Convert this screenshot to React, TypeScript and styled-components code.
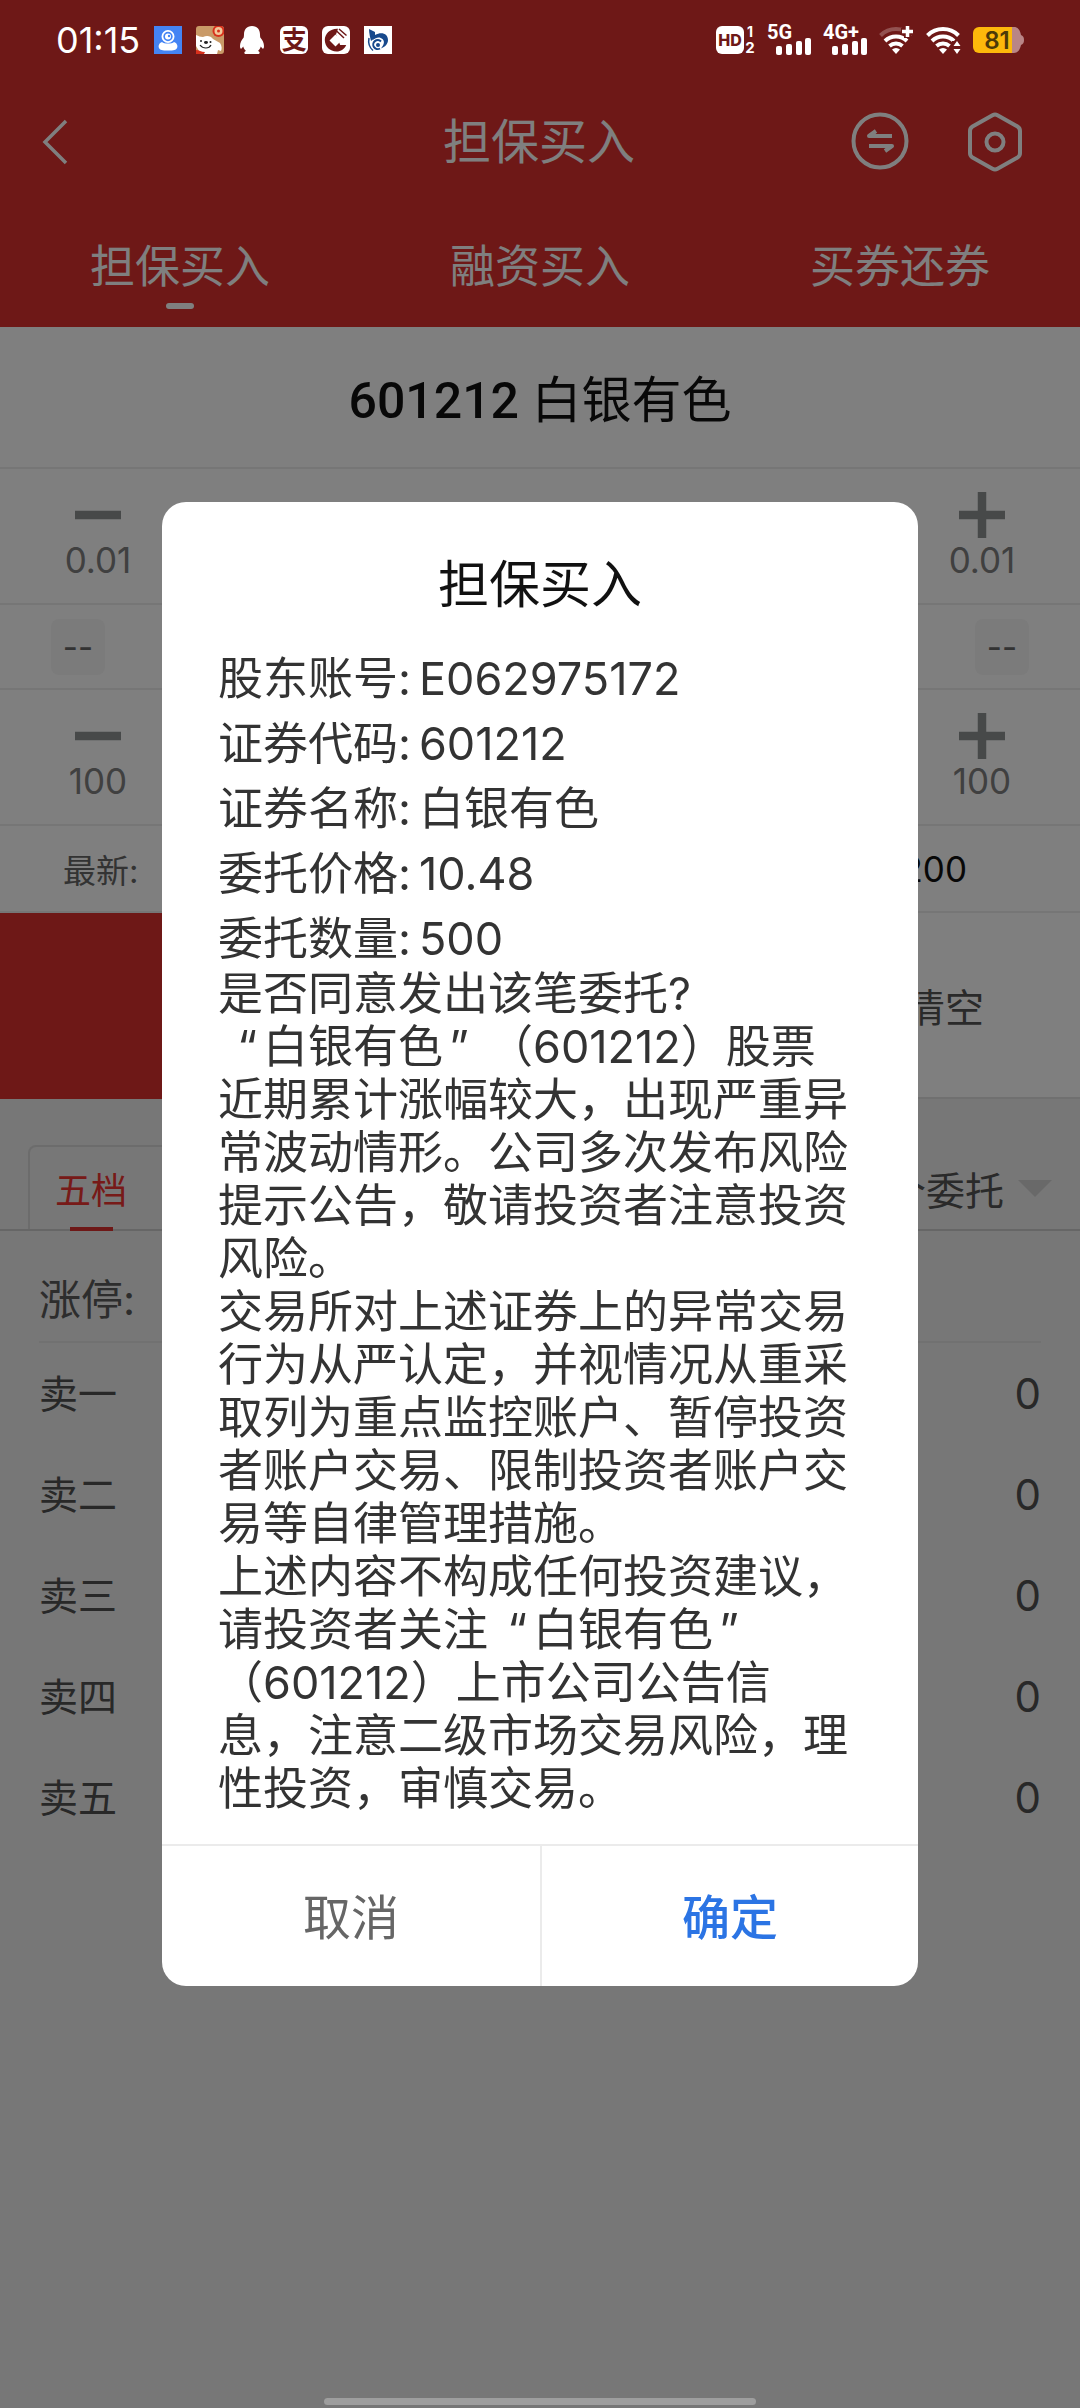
import React from 'react';
import styled, { createGlobalStyle } from 'styled-components';

const GlobalStyle = createGlobalStyle`
  * { box-sizing: border-box; }
  body {
    margin: 0;
    background: #eeeeee;
    font-family: Inter, 'Noto Sans CJK SC', sans-serif;
    color: #333333;
  }
  button {
    margin: 0;
    padding: 0;
    border: 0;
    background: none;
    font: inherit;
    color: inherit;
    cursor: pointer;
  }
  h1, h2, p, dl, dt, dd, ul { margin: 0; padding: 0; font-weight: 400; }
`;

const Screen = styled.div`
  display: flex;
  flex-direction: column;
  min-height: 100vh;
`;

/* ---------- status bar ---------- */

const StatusBar = styled.header`
  position: relative;
  z-index: 3;
  display: flex;
  align-items: center;
  justify-content: space-between;
  height: 80px;
  padding: 0 56px;
  background: #6e1817;
  color: #ffffff;
`;

const StatusGroup = styled.div<{ $gap: number }>`
  display: flex;
  align-items: center;
  gap: ${(p) => p.$gap}px;
`;

const Clock = styled.time`
  font-size: 36px;
  line-height: 40px;
`;

const AppBadge = styled.span`
  display: grid;
  place-items: center;
  width: 28px;
  height: 28px;
  border-radius: 6px;
  background: #ffffff;
  color: #6e1817;
  font-size: 25px;
  font-weight: 700;
  line-height: 28px;
`;

/* ---------- navigation ---------- */

const NavBar = styled.nav`
  display: grid;
  grid-template-columns: 1fr auto 1fr;
  align-items: center;
  height: 123px;
  padding: 0 56px 0 40px;
  background: #dc302e;
  color: #ffffff;
`;

const NavTitle = styled.h1`
  grid-column: 2;
  margin-left: 14px;
  font-size: 48px;
  line-height: 64px;
`;

const NavActions = styled.div`
  display: flex;
  justify-content: flex-end;
  gap: 57px;
`;

const IconButton = styled.button`
  display: flex;
  justify-self: start;
`;

const TopTabs = styled.div`
  display: grid;
  grid-template-columns: repeat(3, 1fr);
  height: 124px;
  background: #dc302e;
  color: #ffffff;
`;

const TopTab = styled.button<{ $active?: boolean }>`
  display: flex;
  flex-direction: column;
  align-items: center;
  padding-top: 34px;
  font-size: 45px;
  line-height: 60px;

  &::after {
    content: '';
    width: 28px;
    height: 6px;
    margin-top: 6px;
    border-radius: 3px;
    background: ${(p) => (p.$active ? '#ffffff' : 'transparent')};
  }
`;

/* ---------- order form ---------- */

const Form = styled.section`
  background: #ffffff;
`;

const Stock = styled.h2`
  height: 142px;
  border-bottom: 2px solid #ededed;
  font-family: Roboto, 'Noto Sans CJK SC', sans-serif;
  font-size: 50px;
  line-height: 148px;
  text-align: center;
  color: #111111;
`;

const StockCode = styled.span`
  font-weight: 500;
`;

const FormRow = styled.div<{ $height: number; $pad?: number }>`
  display: flex;
  align-items: center;
  justify-content: space-between;
  height: ${(p) => p.$height}px;
  padding: 0 ${(p) => p.$pad ?? 0}px;
  border-bottom: 2px solid #ededed;
`;

const StepButton = styled.button`
  display: flex;
  flex-direction: column;
  align-items: center;
  align-self: stretch;
  width: 196px;
  padding-top: 23px;
  font-size: 35px;
  line-height: 44px;
  color: #808080;
`;

const LimitButton = styled.button`
  width: 54px;
  height: 56px;
  border-radius: 8px;
  background: #f6f6f6;
  font-size: 33px;
  line-height: 56px;
  color: #666666;
`;

const Caption = styled.span`
  font-size: 33px;
  color: #666666;
`;

const Amount = styled.span`
  padding-right: 50px;
  font-size: 35px;
  color: #111111;
`;

const Actions = styled.div`
  display: grid;
  grid-template-columns: 3fr 1fr;
  height: 186px;
`;

const BuyButton = styled.button`
  background: #dc302e;
`;

const ClearButton = styled.button`
  border-bottom: 2px solid #e0e0e0;
  font-size: 39px;
  color: #555555;
`;

/* ---------- quotes ---------- */

const QuoteTabs = styled.div`
  display: flex;
  align-items: flex-end;
  justify-content: space-between;
  height: 132px;
  padding: 0 28px;
  border-bottom: 2px solid #cccccc;
`;

const TabBox = styled.div`
  flex: 0 1 600px;
  height: 84px;
  border: 2px solid #d8d8d8;
  border-bottom: 0;
  border-radius: 8px 8px 0 0;
`;

const QuoteTab = styled.button`
  display: flex;
  flex-direction: column;
  align-items: center;
  width: 122px;
  height: 84px;
  padding-top: 18px;
  font-size: 36px;
  line-height: 52px;
  color: #ee3531;

  &::after {
    content: '';
    width: 43px;
    height: 4px;
    margin-top: 10px;
    background: #dc302e;
  }
`;

const OrderFilter = styled.button`
  display: flex;
  align-items: center;
  gap: 14px;
  height: 82px;
  font-size: 39px;
  color: #555555;
`;

const LimitRow = styled.div`
  margin: 0 39px;
  height: 112px;
  border-bottom: 2px solid #e2e2e2;
  font-size: 42px;
  line-height: 138px;
  color: #5a5a5a;
`;

const Quotes = styled.ul`
  flex: 1;
  padding: 0 39px;
  list-style: none;
`;

const Quote = styled.li`
  display: flex;
  justify-content: space-between;
  font-size: 39px;
  line-height: 101px;
  color: #505050;
`;

const Volume = styled.span`
  font-size: 42px;
`;

/* ---------- dialog ---------- */

const Overlay = styled.div`
  position: fixed;
  inset: 0;
  z-index: 2;
  display: flex;
  align-items: center;
  justify-content: center;
  padding-top: 80px;
  background: rgba(0, 0, 0, 0.5);
`;

const Dialog = styled.section`
  width: 70%;
  border-radius: 24px;
  overflow: hidden;
  background: #ffffff;
`;

const DialogTitle = styled.h2`
  padding: 48px 0 18px;
  font-size: 51px;
  line-height: 70px;
  text-align: center;
  color: #111111;
`;

const DialogBody = styled.div`
  padding: 2px 60px 29px 56px;
  font-size: 45px;
  line-height: 53px;
  text-spacing-trim: space-all;
`;

const Details = styled.dl`
  padding-bottom: 2px;
`;

const Detail = styled.div`
  display: flex;
  gap: 8px;
  padding-top: 12px;
`;

/* A quotation mark that fills one full-width character cell. */
const WideQuote = styled.span<{ $open?: boolean }>`
  display: inline-block;
  width: 1em;
  padding: 0 6px;
  text-align: ${(p) => (p.$open ? 'right' : 'left')};
`;

const DialogActions = styled.footer`
  display: grid;
  grid-template-columns: 1fr 1fr;
  border-top: 2px solid #ebebeb;
`;

const DialogButton = styled.button<{ $primary?: boolean }>`
  height: 140px;
  padding-bottom: 4px;
  font-size: 48px;
  font-weight: ${(p) => (p.$primary ? 500 : 400)};
  color: ${(p) => (p.$primary ? '#2b74e4' : '#666666')};

  & + & { border-left: 2px solid #ebebeb; }
`;

const HomeBar = styled.div`
  position: fixed;
  z-index: 3;
  bottom: 3px;
  left: 30%;
  width: 40%;
  height: 7px;
  border-radius: 4px;
  background: #9e9e9e;
`;

/* ---------- drawings ---------- */

const CameraIcon = () => (
  <svg width="28" height="28" viewBox="0 0 28 28">
    <rect width="28" height="28" fill="#4484f4" />
    <circle cx="14" cy="10.5" r="5.6" fill="none" stroke="#fff" strokeWidth="1.8" />
    <circle cx="14" cy="10.5" r="3" fill="#fff" />
    <circle cx="15" cy="10" r="1.2" fill="#4484f4" />
    <path d="M8 16c2 2 10 2 12 0 3 1 4 4 3 6-1 2-3 2.500-9 2.500S6 24 5 22c-1-2 0-5 3-6z" fill="#fff" />
  </svg>
);

const DogIcon = () => (
  <svg width="28" height="28" viewBox="0 0 28 28">
    <rect width="28" height="28" rx="3" fill="#c99a68" />
    <circle cx="22.500" cy="5" r="6" fill="#d8301c" />
    <circle cx="22.500" cy="5" r="4" fill="#f2c79a" />
    <circle cx="22.500" cy="5" r="1.500" fill="#d8301c" />
    <path d="M0 9c3 1 4 2 7 2 4-2 8-1 10 2l7 4c2 3 2 6 1 8l-3-1-1 4H8l-5-3-3-5z" fill="#fff" />
    <path d="M0 24c3 0 5 2 9 2l-1 2H0z" fill="#d8301c" />
    <ellipse cx="10" cy="16.500" rx="2" ry="1.400" fill="#222" />
    <circle cx="5" cy="15" r="1" fill="#222" />
    <circle cx="14.500" cy="16" r="1" fill="#222" />
    <path d="M4 19c3 4 9 4 11 0" fill="none" stroke="#222" strokeWidth="1.200" />
  </svg>
);

const PenguinIcon = () => (
  <svg width="28" height="28" viewBox="0 0 28 28" fill="#fff">
    <path d="M14 0c-5.500 0-8 4-8 8.500 0 1.500-.300 3-.300 3C3.500 14 2 17 2 20c0 2.500.800 3.200 1.500 2.500.7-.500 1.200-1.300 1.700-2 .5 1.800 1.500 3.300 2.800 4.500-2 .600-2.500 3 0 3h12c2.500 0 2-2.400 0-3 1.300-1.200 2.300-2.700 2.800-4.500.5.700 1 1.500 1.700 2 .700.700 1.500 0 1.500-2.500 0-3-1.500-6-3.700-8.500 0 0-.300-1.500-.300-3C22 4 19.500 0 14 0z" />
  </svg>
);

const BankIcon = () => (
  <svg width="28" height="28" viewBox="0 0 28 28">
    <rect width="28" height="28" rx="6" fill="#fff" />
    <path d="M16 2.700C8.500 2.200 2.800 7.500 2.800 14S8 25.500 14.500 25.500c4.500 0 8-2.500 9.700-6.500h-6L14 8.500z" fill="#6e1817" />
    <path d="M13.500 8.500l6 6-6 6-6-6z" fill="#fff" />
    <path d="M13 3.500l9 8.500M17 3l7.500 6.500" stroke="#6e1817" strokeWidth="1.500" />
  </svg>
);

const SwirlIcon = () => (
  <svg width="28" height="28" viewBox="0 0 28 28">
    <rect width="28" height="28" fill="#fff" />
    <path d="M5 3l6 3v6l-4 3c-1-4-2-8-2-12z" fill="#17498c" />
    <path d="M11 9c7-4 13-1 13 5 0 4-3 7-7 8.500 3-4 4-7 1.500-9.500C16 10.500 12 11 9 14z" fill="#17498c" />
    <path d="M5 12c-1 5 0 9 4 12.500" fill="none" stroke="#17498c" strokeWidth="1.500" />
    <path d="M17 15.500a4.500 4.500 0 1 0-1 7" fill="none" stroke="#17498c" strokeWidth="2" />
    <circle cx="14" cy="19" r="2" fill="#17498c" />
  </svg>
);

const HdIcon = () => (
  <svg width="40" height="40" viewBox="0 -5 40 40" fontFamily="Inter, sans-serif" fontWeight="700">
    <rect y="1" width="28" height="28" rx="6" fill="#fff" />
    <text x="14" y="21" fontSize="16" fontWeight="800" textAnchor="middle" fill="#6e1817">HD</text>
    <text x="34" y="12" fontSize="14" textAnchor="middle" fill="#fff">1</text>
    <text x="34" y="28" fontSize="15" textAnchor="middle" fill="#fff">2</text>
  </svg>
);

const SignalIcon = ({ label }: { label: string }) => (
  <svg width="45" height="44" viewBox="0 -6 45 44" fill="#fff">
    <text x="0" y="15" fontSize="20" fontWeight="700" fontFamily="Roboto, sans-serif">{label}</text>
    <rect x="9" y="22" width="6" height="9" rx="2" />
    <rect x="19" y="20" width="6" height="11" rx="2" />
    <rect x="29" y="17" width="6" height="14" rx="2" />
    <rect x="38" y="14" width="6" height="17" rx="2" />
  </svg>
);

const WifiArcs = ({ dimOuter }: { dimOuter?: boolean }) => (
  <g fill="none" stroke="#fff" strokeWidth="4">
    <path d="M1.500 10.500a22 22 0 0 1 31 0" opacity={dimOuter ? 0.25 : 1} />
    <path d="M6 16a16 16 0 0 1 22 0" />
    <path d="M10.500 21a10 10 0 0 1 13 0" />
    <path d="M13 24.500a6 6 0 0 1 8 0L17 29z" fill="#fff" stroke="none" />
  </g>
);

const WifiPlusIcon = () => (
  <svg width="36" height="30" viewBox="0 0 36 30">
    <WifiArcs dimOuter />
    <path d="M22 6.500h13M28.500 0v13" stroke="#6e1817" strokeWidth="7" />
    <path d="M23 6.500h11M28.500 1v11" stroke="#fff" strokeWidth="3.500" />
  </svg>
);

const WifiIcon = () => (
  <svg width="36" height="30" viewBox="0 0 36 30">
    <WifiArcs />
    <path d="M26 16h10v14H26z" fill="#6e1817" />
    <path d="M31 16l3.500 5h-7zM31 29l3.500-5h-7z" fill="#fff" />
  </svg>
);

const BatteryIcon = () => (
  <svg width="51" height="36" viewBox="0 -5 51 36">
    <path d="M39 0h2c3.500 0 6 2.500 7 8 2 1 3 2 3 5s-1 4-3 5c-1 5-3.500 8-7 8h-2z" fill="#b98586" />
    <path d="M6 0h33v26H6a6 6 0 0 1-6-6V6a6 6 0 0 1 6-6z" fill="#fdb80b" />
    <text x="24" y="22" fontSize="24" fontWeight="600" fontFamily="Inter, sans-serif" textAnchor="middle" fill="#4d3a08">81</text>
  </svg>
);

const BackIcon = () => (
  <svg width="28" height="48" viewBox="0 0 28 48" fill="none" stroke="#fff" strokeWidth="3.500">
    <path d="M26 3L5 24l21 21" />
  </svg>
);

const SwapIcon = () => (
  <svg width="58" height="58" viewBox="0 0 58 58" fill="none" stroke="#fff" strokeWidth="4">
    <circle cx="29" cy="29" r="26.500" />
    <path d="M41 24H18l7-5M18 34h23l-7 5" strokeWidth="4" strokeLinejoin="round" />
  </svg>
);

const HexIcon = () => (
  <svg width="58" height="60" viewBox="0 0 58 60" fill="none" stroke="#fff" strokeWidth="4" strokeLinejoin="round">
    <path d="M26.500 3.200q2.500-1.400 5 0L51.500 14.500q2.500 1.500 2.500 4.500v22q0 3-2.500 4.500L31.500 56.800q-2.500 1.400-5 0L6.500 45.500Q4 44 4 41V19q0-3 2.500-4.500z" />
    <circle cx="29" cy="30" r="8.500" />
  </svg>
);

const StepIcon = ({ plus }: { plus?: boolean }) => (
  <svg width="46" height="46" viewBox="0 0 46 46" stroke="#8e9292" strokeWidth="8.500">
    <path d={plus ? 'M0 23h46M23 0v46' : 'M0 23h46'} />
  </svg>
);

const CaretIcon = () => (
  <svg width="34" height="17" viewBox="0 0 34 17">
    <path d="M0 0h34L17 17z" fill="#d2d2d2" />
  </svg>
);

/* ---------- data ---------- */

const details = [
  ['股东账号:', 'E062975172'],
  ['证券代码:', '601212'],
  ['证券名称:', '白银有色'],
  ['委托价格:', '10.48'],
  ['委托数量:', '500'],
];

const sells = ['卖一', '卖二', '卖三', '卖四', '卖五'];

const StockName = () => (
  <>
    <WideQuote $open>“</WideQuote>白银有色<WideQuote>”</WideQuote>
  </>
);

const Stepper = ({ step }: { step: string }) => (
  <FormRow $height={136}>
    <StepButton><StepIcon />{step}</StepButton>
    <StepButton><StepIcon plus />{step}</StepButton>
  </FormRow>
);

export default function App() {
  return (
    <>
      <GlobalStyle />
      <Screen>
        <StatusBar>
          <StatusGroup $gap={14}>
            <Clock>01:15</Clock>
            <CameraIcon />
            <DogIcon />
            <PenguinIcon />
            <AppBadge>支</AppBadge>
            <BankIcon />
            <SwirlIcon />
          </StatusGroup>
          <StatusGroup $gap={11}>
            <HdIcon />
            <SignalIcon label="5G" />
            <SignalIcon label="4G+" />
            <WifiPlusIcon />
            <WifiIcon />
            <BatteryIcon />
          </StatusGroup>
        </StatusBar>

        <NavBar>
          <IconButton aria-label="返回"><BackIcon /></IconButton>
          <NavTitle>担保买入</NavTitle>
          <NavActions>
            <IconButton aria-label="切换"><SwapIcon /></IconButton>
            <IconButton aria-label="设置"><HexIcon /></IconButton>
          </NavActions>
        </NavBar>
        <TopTabs>
          <TopTab $active>担保买入</TopTab>
          <TopTab>融资买入</TopTab>
          <TopTab>买券还券</TopTab>
        </TopTabs>

        <Form>
          <Stock><StockCode>601212</StockCode> 白银有色</Stock>
          <Stepper step="0.01" />
          <FormRow $height={85} $pad={51}>
            <LimitButton>--</LimitButton>
            <LimitButton>--</LimitButton>
          </FormRow>
          <Stepper step="100" />
          <FormRow $height={87} $pad={63}>
            <Caption>最新:</Caption>
            <Amount>200</Amount>
          </FormRow>
          <Actions>
            <BuyButton aria-label="买入" />
            <ClearButton>清空</ClearButton>
          </Actions>
        </Form>

        <QuoteTabs>
          <TabBox><QuoteTab>五档</QuoteTab></TabBox>
          <OrderFilter>个委托<CaretIcon /></OrderFilter>
        </QuoteTabs>
        <LimitRow>涨停:</LimitRow>
        <Quotes>
          {sells.map((name) => (
            <Quote key={name}><span>{name}</span><Volume>0</Volume></Quote>
          ))}
        </Quotes>
      </Screen>

      <Overlay>
        <Dialog role="dialog" aria-modal="true" aria-labelledby="dialog-title">
          <DialogTitle id="dialog-title">担保买入</DialogTitle>
          <DialogBody>
            <Details>
              {details.map(([label, value]) => (
                <Detail key={label}><dt>{label}</dt><dd>{value}</dd></Detail>
              ))}
            </Details>
            <p>是否同意发出该笔委托?</p>
            <p><StockName />（601212）股票近期累计涨幅较大，出现严重异常波动情形。公司多次发布风险提示公告，敬请投资者注意投资风险。</p>
            <p>交易所对上述证券上的异常交易行为从严认定，并视情况从重采取列为重点监控账户、暂停投资者账户交易、限制投资者账户交易等自律管理措施。</p>
            <p>上述内容不构成任何投资建议，请投资者关注<StockName />（601212）上市公司公告信息，注意二级市场交易风险，理性投资，审慎交易。</p>
          </DialogBody>
          <DialogActions>
            <DialogButton>取消</DialogButton>
            <DialogButton $primary>确定</DialogButton>
          </DialogActions>
        </Dialog>
      </Overlay>
      <HomeBar />
    </>
  );
}
